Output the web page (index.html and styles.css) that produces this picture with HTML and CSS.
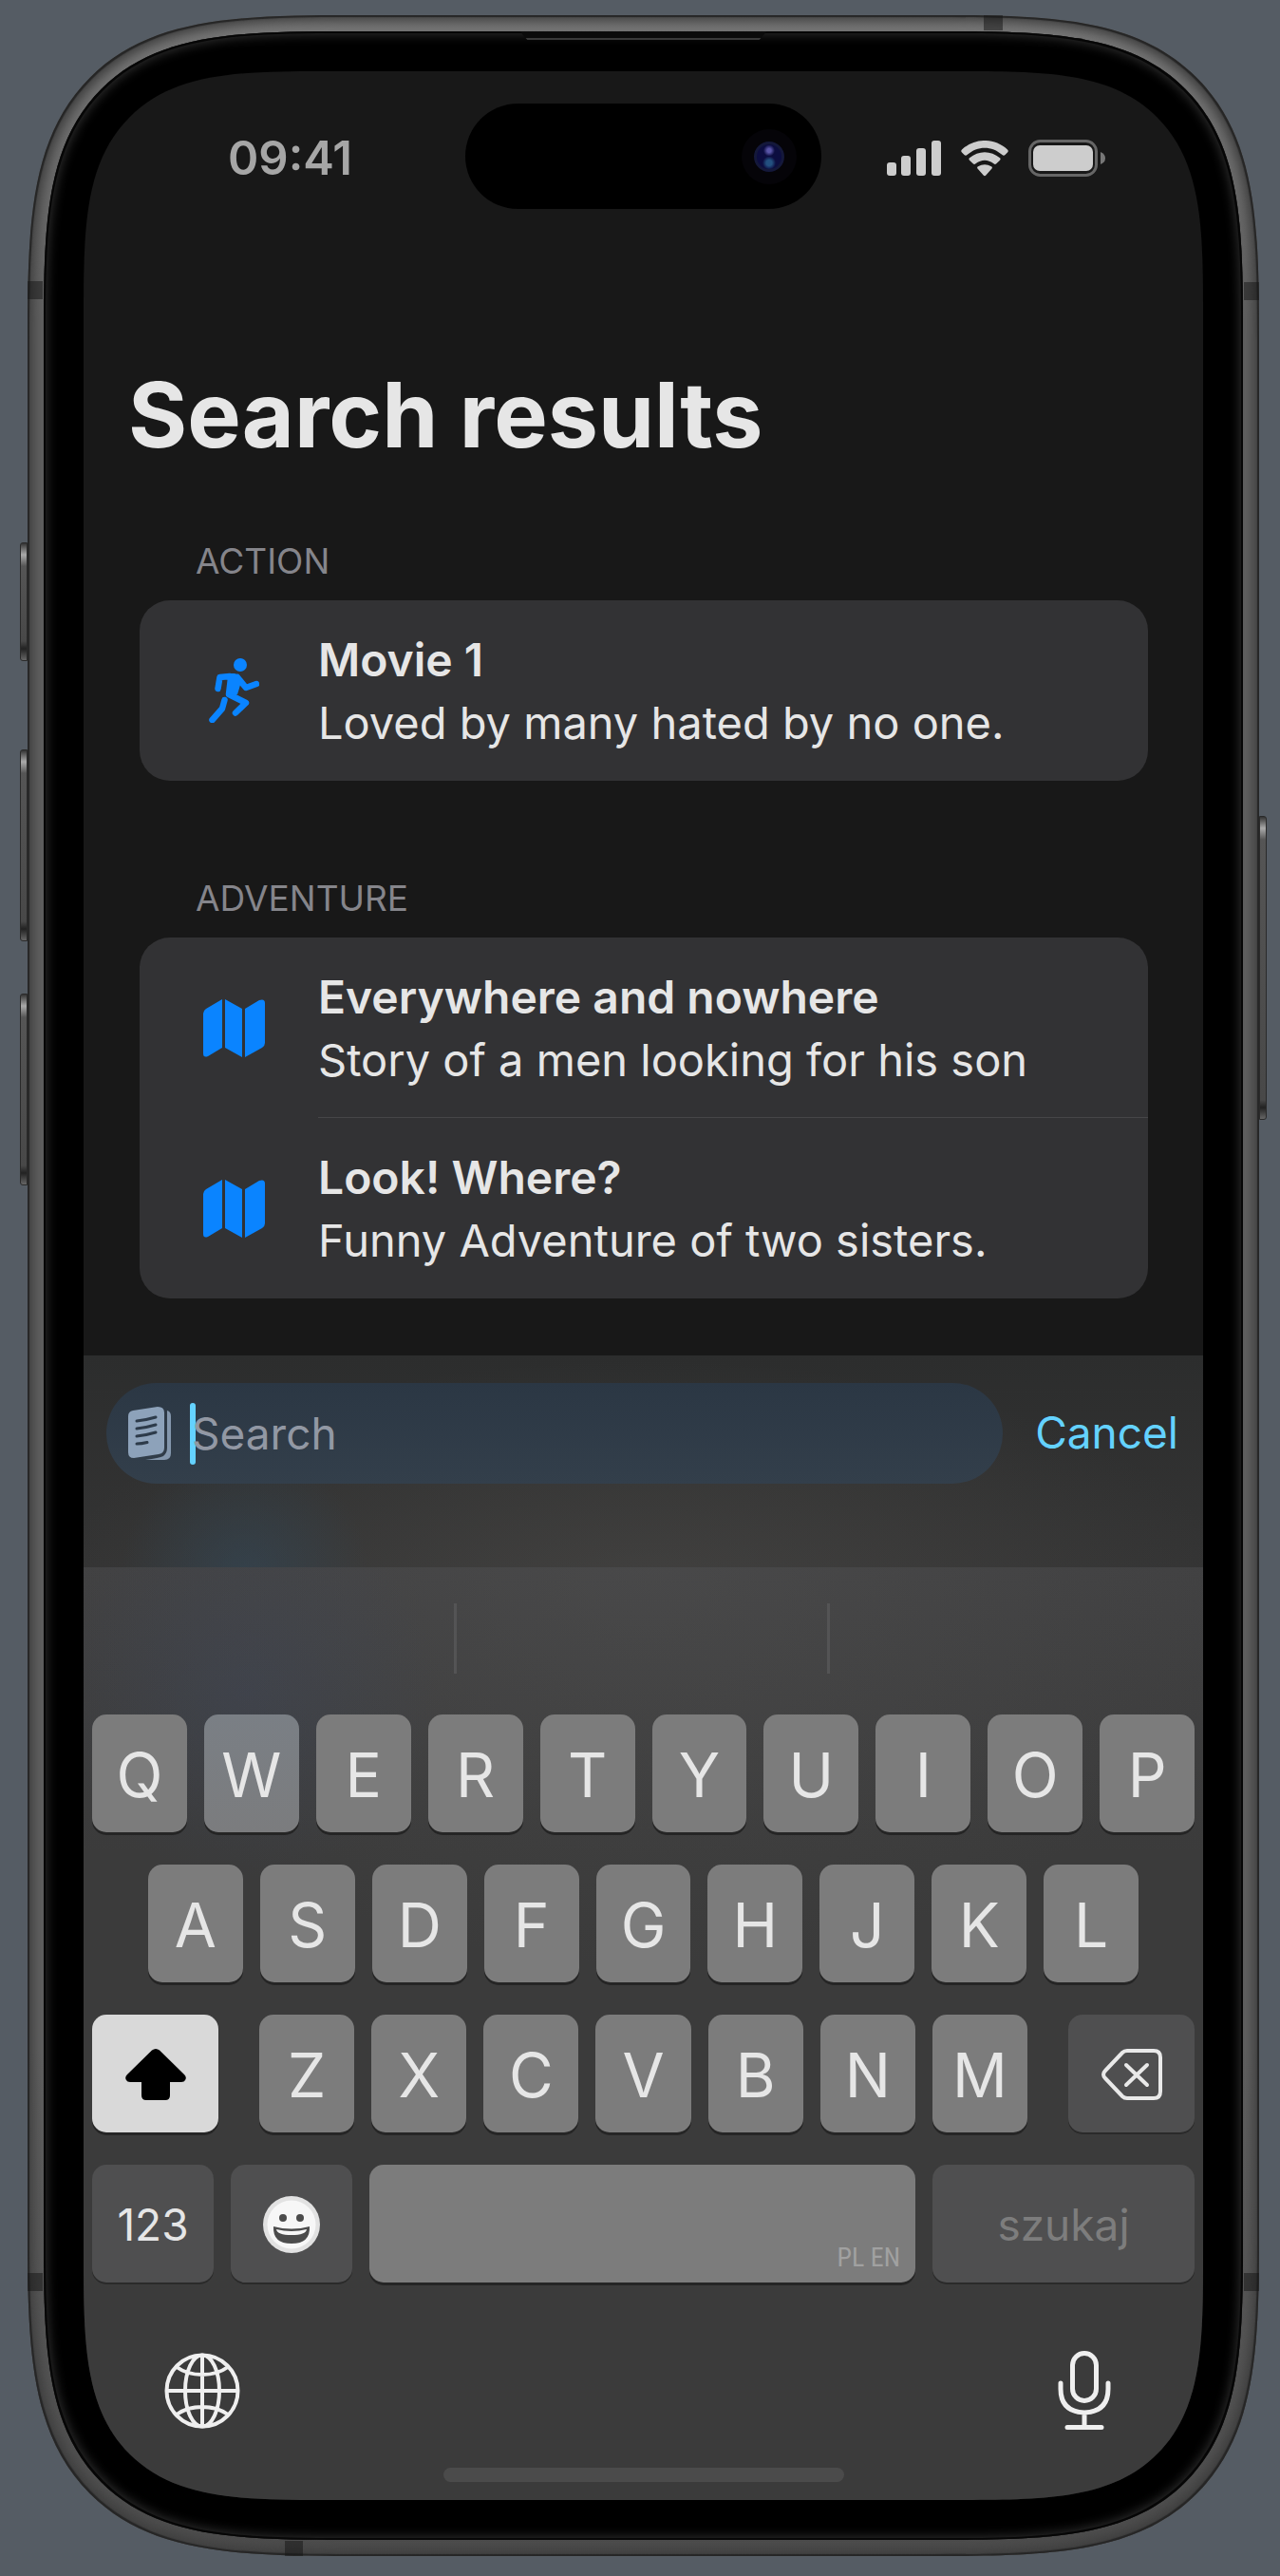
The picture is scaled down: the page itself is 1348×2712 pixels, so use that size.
FILE: index.html
```html
<!DOCTYPE html>
<html lang="en">
<head>
<meta charset="utf-8">
<meta name="viewport" content="width=device-width, initial-scale=1">
<title>Search results</title>
<link rel="stylesheet" href="styles.css">
</head>
<body>
<svg class="sprite" aria-hidden="true">
  <symbol id="map" viewBox="0 0 65 61">
    <path d="M0 15q0-3 3-5L20 0V51L5 60Q0 62 0 57zM23 0 41 10V61L23 51zM44 10 59 1Q65-1 65 4V46q0 3-3 5L44 61z"/>
  </symbol>
</svg>
<main class="device">
  <span class="side side-action"></span>
  <span class="side side-up"></span>
  <span class="side side-down"></span>
  <span class="side side-power"></span>
  <span class="band band-tl"></span>
  <span class="band band-tr"></span>
  <span class="band band-bl"></span>
  <span class="band band-br"></span>
  <span class="band band-top"></span>
  <span class="band band-bottom"></span>
  <div class="bezel">
    <span class="earpiece"></span>
    <div class="screen">
      <header class="status">
        <time class="clock">09:41</time>
        <div class="island"><span class="camera"><span class="lens"></span></span></div>
        <div class="indicators">
          <svg width="57" height="38" viewBox="0 0 57 38" fill="#cdcdcd"><rect y="23" width="10" height="14" rx="3"/><rect x="15" y="16" width="10" height="21" rx="3"/><rect x="31" y="8" width="10" height="29" rx="3"/><rect x="47" width="10" height="37" rx="3"/></svg>
          <svg width="50" height="38" viewBox="0 0 50 38" fill="#cdcdcd"><path d="M1 12.500Q-.5 11 1 9.500C14.500-3.200 35.500-3.200 49 9.500Q50.500 11 49 12.500L46.500 15Q45 16.500 43.500 15C32.500 5.200 17.500 5.200 6.500 15Q5 16.500 3.500 15zM9 20.700Q7.800 19.500 9 18.300C18.500 10.300 31.500 10.300 41 18.300Q42.200 19.500 41 20.700L37.300 24.300Q36 25.500 34.500 24.300C28.500 19.500 21.500 19.500 15.500 24.300Q14 25.500 12.700 24.300zM17.500 29.500Q16.500 28.300 18 27.300C22.500 24.400 27.500 24.400 32 27.300Q33.500 28.300 32.500 29.500L26.300 36.500Q25 37.800 23.700 36.500z"/></svg>
          <svg width="82" height="39" viewBox="0 0 82 39"><rect x="1.500" y="1.500" width="70" height="36" rx="11" fill="none" stroke="#666" stroke-width="3"/><rect x="5" y="6" width="63" height="27" rx="7" fill="#cdcdcd"/><path d="M76 13q5 2 5 6.500T76 26z" fill="#777"/></svg>
        </div>
      </header>

      <section class="content">
        <h1 class="title">Search results</h1>
        <h2 class="group-title">ACTION</h2>
        <ul class="card">
          <li class="row">
            <span class="row-icon"><svg width="53" height="68" viewBox="0 0 53 68"><circle cx="33" cy="7" r="7" fill="#0a84ff"/><path d="M22 19 11.500 20 9.500 32M23 21 21 38 39 47 28 57.500M30 20 39 31 50 27M16.500 44 14 53 3.500 65" fill="none" stroke="#0a84ff" stroke-width="6.500" stroke-linecap="round" stroke-linejoin="round"/><path d="M20 16H27Q34 17 34 25L30 38 20 39z" fill="#0a84ff"/></svg></span>
            <div class="row-text"><h3 class="name">Movie 1</h3><p class="about">Loved by many hated by no one.</p></div>
          </li>
        </ul>
        <h2 class="group-title">ADVENTURE</h2>
        <ul class="card">
          <li class="row">
            <span class="row-icon"><svg width="65" height="61" fill="#0a84ff"><use href="#map"/></svg></span>
            <div class="row-text"><h3 class="name">Everywhere and nowhere</h3><p class="about">Story of a men looking for his son</p></div>
          </li>
          <li class="row">
            <span class="row-icon"><svg width="65" height="61" fill="#0a84ff"><use href="#map"/></svg></span>
            <div class="row-text"><h3 class="name">Look! Where?</h3><p class="about">Funny Adventure of two sisters.</p></div>
          </li>
        </ul>
      </section>

      <form class="searchbar">
        <label class="field">
          <svg width="45" height="56" viewBox="0 0 45 56"><path d="M41 4Q45 5 45 10V49Q45 56 38 56H18Q33 54 37 52Q41 49 41 43z" fill="#8497ad"/><path d="M0 10Q0 5 5 4L31 0Q38 0 38 6V43Q38 49 32 50L6 54Q0 54 0 48z" fill="#8da2ba"/><path d="M9 15Q19 14 29 11M9 23Q19 22 29 19M9 31Q19 30 29 27M9 39Q14 39 20 37.500" fill="none" stroke="#2d3b4a" stroke-width="3" stroke-linecap="round"/></svg>
          <span class="caret"></span>
          <input class="input" type="search" placeholder="Search" aria-label="Search">
        </label>
        <button class="cancel" type="button">Cancel</button>
      </form>

      <section class="keyboard" aria-label="Keyboard">
        <div class="suggestions"><span></span><span></span><span></span></div>
        <div class="keys">
          <button class="key">Q</button><button class="key cool">W</button><button class="key">E</button><button class="key">R</button><button class="key">T</button><button class="key">Y</button><button class="key">U</button><button class="key">I</button><button class="key">O</button><button class="key">P</button>
        </div>
        <div class="keys keys-home">
          <button class="key">A</button><button class="key">S</button><button class="key">D</button><button class="key">F</button><button class="key">G</button><button class="key">H</button><button class="key">J</button><button class="key">K</button><button class="key">L</button>
        </div>
        <div class="keys keys-bottom">
          <button class="key shift" aria-label="Shift"><svg width="64" height="54" viewBox="0 0 64 54"><path d="M28 1.500Q32-1.500 36 1.500L62 27Q65 30 63 33Q62 35 59 35H47V49Q47 54 42 54H22Q17 54 17 49V35H5Q2 35 1 33Q-1 30 2 27z"/></svg></button>
          <div class="letters"><button class="key">Z</button><button class="key">X</button><button class="key">C</button><button class="key">V</button><button class="key">B</button><button class="key">N</button><button class="key">M</button></div>
          <button class="key dark wide" aria-label="Delete"><svg width="64" height="54" viewBox="0 0 64 54" fill="none" stroke="#e9e9e9" stroke-width="4" stroke-linecap="round" stroke-linejoin="round"><path d="M27 2H55Q62 2 62 9V45Q62 52 55 52H27Q24 52 22 50L4 31Q0 27 4 23L22 4Q24 2 27 2zM26 17 48 38M48 17 26 38"/></svg></button>
        </div>
        <div class="keys">
          <button class="key dark mode">123</button>
          <button class="key dark mode" aria-label="Emoji"><svg width="60" height="60" viewBox="0 0 60 60"><circle cx="30" cy="30" r="30" fill="#e2e2e2"/><circle cx="30" cy="30" r="25.500" fill="#f7f7f7"/><circle cx="21" cy="23" r="4" fill="#4c4c4c"/><circle cx="39" cy="23" r="4" fill="#4c4c4c"/><path d="M11 32Q30 37 49 32Q50 50 30 50T11 32z" fill="#4c4c4c"/><path d="M14 35Q30 39 46 35Q45 41 30 41T14 35z" fill="#f7f7f7"/></svg></button>
          <button class="key space">PL EN</button>
          <button class="key dark go">szukaj</button>
        </div>
        <div class="dock">
          <button class="plain" aria-label="Next keyboard"><svg width="80" height="80" viewBox="0 0 80 80" fill="none" stroke="#efefef" stroke-width="4"><circle cx="40" cy="40" r="37.500"/><ellipse cx="40" cy="40" rx="18" ry="37.500"/><path d="M40 2V78M2 40H78M13 15Q24 23 40 23T67 15M13 65Q24 57 40 57T67 65"/></svg></button>
          <button class="plain" aria-label="Dictate"><svg width="56" height="84" viewBox="0 0 56 84" fill="none" stroke="#efefef" stroke-width="5" stroke-linecap="round"><rect x="15.500" y="2.500" width="25" height="50" rx="12.500"/><path d="M3 34V40Q3 64 28 65Q53 64 53 40V34M28 65V80M10 80.500H46"/></svg></button>
        </div>
        <div class="home"></div>
      </section>
    </div>
  </div>
</main>
</body>
</html>
```
FILE: styles.css
```css
* { box-sizing: border-box; margin: 0; padding: 0; }

body {
  background: #555c64;
  font-family: Inter, "Liberation Sans", sans-serif;
  color: #e6e6e6;
  padding: 16px 22px 23px 29px;
}

.sprite { position: absolute; width: 0; height: 0; }
svg { display: block; flex: none; }
button, input { font: inherit; color: inherit; border: 0; background: none; }
ul { list-style: none; }

/* Phone body */
.device {
  position: relative;
  padding: 17px;
  background: linear-gradient(#767676, #606060 12%, #606060 80%, #4c4c4c);
  border-radius: 224px;
  box-shadow: inset 0 0 1px 2px #262626, inset 0 0 12px 6px #3e3e3e;
}
.bezel {
  position: relative;
  padding: 42px;
  background: #000;
  border-radius: 207px;
  box-shadow: inset 0 0 0 2px #060606, inset 0 0 12px 3px #303030;
}
.screen {
  background: #181818;
  border-radius: 165px;
  overflow: hidden;
  display: flex;
  flex-direction: column;
}
@supports (corner-shape: superellipse(1.7)) {
  .device { border-radius: 342px; corner-shape: superellipse(1.7); }
  .bezel { border-radius: 316px; corner-shape: superellipse(1.7); }
  .screen { border-radius: 252px; corner-shape: superellipse(1.7); }
}

.side {
  position: absolute;
  left: -8px;
  width: 8px;
  border: 1px solid #2a2a2a;
  border-radius: 3px 0 0 3px;
  background: linear-gradient(#333, #aaa 12px, #555 24px, #484848 calc(100% - 20px), #222 calc(100% - 12px), #666);
}
.side-action { top: 555px; height: 125px; }
.side-up { top: 773px; height: 202px; }
.side-down { top: 1030px; height: 202px; }
.side-power { left: auto; right: -8px; top: 843px; height: 320px; border-radius: 0 3px 3px 0; }

.band { position: absolute; width: 16px; height: 19px; background: rgba(20, 20, 20, 0.5); }
.band-tl { left: 0; top: 280px; }
.band-tr { right: 0; top: 281px; }
.band-bl { left: 0; bottom: 279px; }
.band-br { right: 0; bottom: 279px; }
.band-top { right: 270px; top: 0; width: 20px; height: 16px; }
.band-bottom { left: 271px; bottom: 0; width: 19px; height: 16px; }

.earpiece {
  position: absolute;
  top: 0;
  left: 50%;
  width: 260px;
  height: 9px;
  margin-left: -130px;
  background: #0b0b0b;
  border-bottom: 2px solid #3a3a3a;
  clip-path: polygon(0 0, 100% 0, 97% 100%, 3% 100%);
}

/* Status bar */
.status {
  display: grid;
  grid-template-columns: 1fr 375px 1fr;
  align-items: center;
  padding: 34px 0 0;
}
.clock {
  font-size: 49px;
  line-height: 60px;
  font-weight: 600;
  color: #a6a6a6;
  padding: 4px 0 0 152px;
}
.island {
  height: 111px;
  border-radius: 56px;
  background: #000;
  display: flex;
  align-items: center;
  justify-content: flex-end;
  padding-right: 26px;
}
.camera {
  width: 58px;
  height: 58px;
  border-radius: 50%;
  background: #050408;
  display: grid;
  place-items: center;
}
.lens {
  width: 32px;
  height: 32px;
  border-radius: 50%;
  border: 3px solid #14183a;
  background: radial-gradient(circle at 50% 25%, #5a56a8 0 2px, transparent 6px), radial-gradient(circle at 50% 75%, #235080 0 3px, transparent 7px), #0c0d40;
}
.indicators { display: flex; align-items: center; gap: 21px; padding: 4px 0 0 69px; }

/* Results */
.content { padding: 157px 58px 60px 59px; }
.title { font-size: 95px; line-height: 120px; font-weight: 700; margin-left: -12px; }
.group-title {
  font-size: 37px;
  line-height: 46px;
  font-weight: 400;
  color: #85858b;
  padding-left: 59px;
  margin: 71px 0 18px;
}
.card + .group-title { margin-top: 101px; }
.card { background: #323234; border-radius: 32px; overflow: hidden; }
.row { display: flex; align-items: stretch; min-height: 190px; }
.row-icon { width: 188px; padding-left: 10px; display: grid; place-items: center; flex: none; }
.row-text { flex: 1; padding: 30px 0 28px; }
.row + .row .row-text { box-shadow: 0 -1px #464648; }
.name, .about { font-size: 48px; line-height: 66px; font-weight: 600; }
.about { font-size: 47px; font-weight: 400; }

/* Search bar */
.searchbar {
  display: flex;
  align-items: flex-start;
  gap: 34px;
  height: 223px;
  padding: 29px 26px 0 24px;
  background:
    radial-gradient(circle at 170px 230px, rgba(48, 76, 98, 0.45), transparent 130px),
    radial-gradient(ellipse 620px 240px at 50% 110%, rgba(85, 83, 80, 0.4), transparent),
    linear-gradient(#2c2d2d, #343434);
}
.field {
  flex: 1;
  display: flex;
  align-items: center;
  height: 106px;
  padding-left: 23px;
  border-radius: 53px;
  background: linear-gradient(#2b3744, #333f4b);
}
.caret { width: 6px; height: 65px; margin-left: 20px; border-radius: 3px; background: #64d2ff; }
.input { flex: 1; min-width: 0; height: 66px; margin-left: -4px; font-size: 46px; outline: 0; }
.input::placeholder { color: #9298a4; opacity: 1; }
.cancel { font-size: 46px; line-height: 104px; color: #64d2ff; }

/* Keyboard */
.keyboard {
  display: flex;
  flex-direction: column;
  padding: 0 9px 19px;
  background:
    radial-gradient(circle at 170px 130px, rgba(60, 72, 98, 0.3), transparent 200px),
    radial-gradient(ellipse 640px 420px at 50% 0, rgba(90, 90, 90, 0.3), transparent),
    linear-gradient(#414142, #3b3b3b 300px);
}
.suggestions { display: grid; grid-template-columns: repeat(3, 1fr); height: 155px; margin: 0 -9px; padding: 38px 0 43px; }
.suggestions span:not(:last-child) { border-right: 3px solid #545455; }
.keys { display: flex; gap: 18px; margin-bottom: 34px; }
.keys-home { padding: 0 59px; }
.keys-bottom { gap: 43px; }
.letters { display: flex; gap: 18px; flex: 1; }
.key {
  flex: 1;
  min-width: 0;
  height: 124px;
  border-radius: 15px;
  background: #7c7c7c;
  box-shadow: 0 3px #252525;
  font-size: 64px;
  padding-top: 2px;
  display: flex;
  align-items: center;
  justify-content: center;
}
.cool { background: linear-gradient(#7a7f85, #7b7c7e); }
.dark { background: #4f4f50; box-shadow: 0 2px #2a2a2a; font-size: 46px; }
.shift { background: #d9d9d9; }
.shift, .wide { flex: 0 0 133px; }
.mode { flex: 0 0 128px; }
.space {
  flex: 1;
  font-family: "Roboto Condensed", Roboto, "Liberation Sans", sans-serif;
  font-size: 28px;
  color: #a1a1a1;
  align-items: flex-end;
  justify-content: flex-end;
  padding: 0 16px 10px;
}
.go { flex: 0 0 276px; color: #7d7d7d; }
.dock { display: flex; justify-content: space-between; align-items: center; padding: 38px 88px 39px 76px; }
.home { width: 422px; max-width: 80%; height: 15px; margin: 0 auto; border-radius: 8px; background: #4b4b4b; }
```
